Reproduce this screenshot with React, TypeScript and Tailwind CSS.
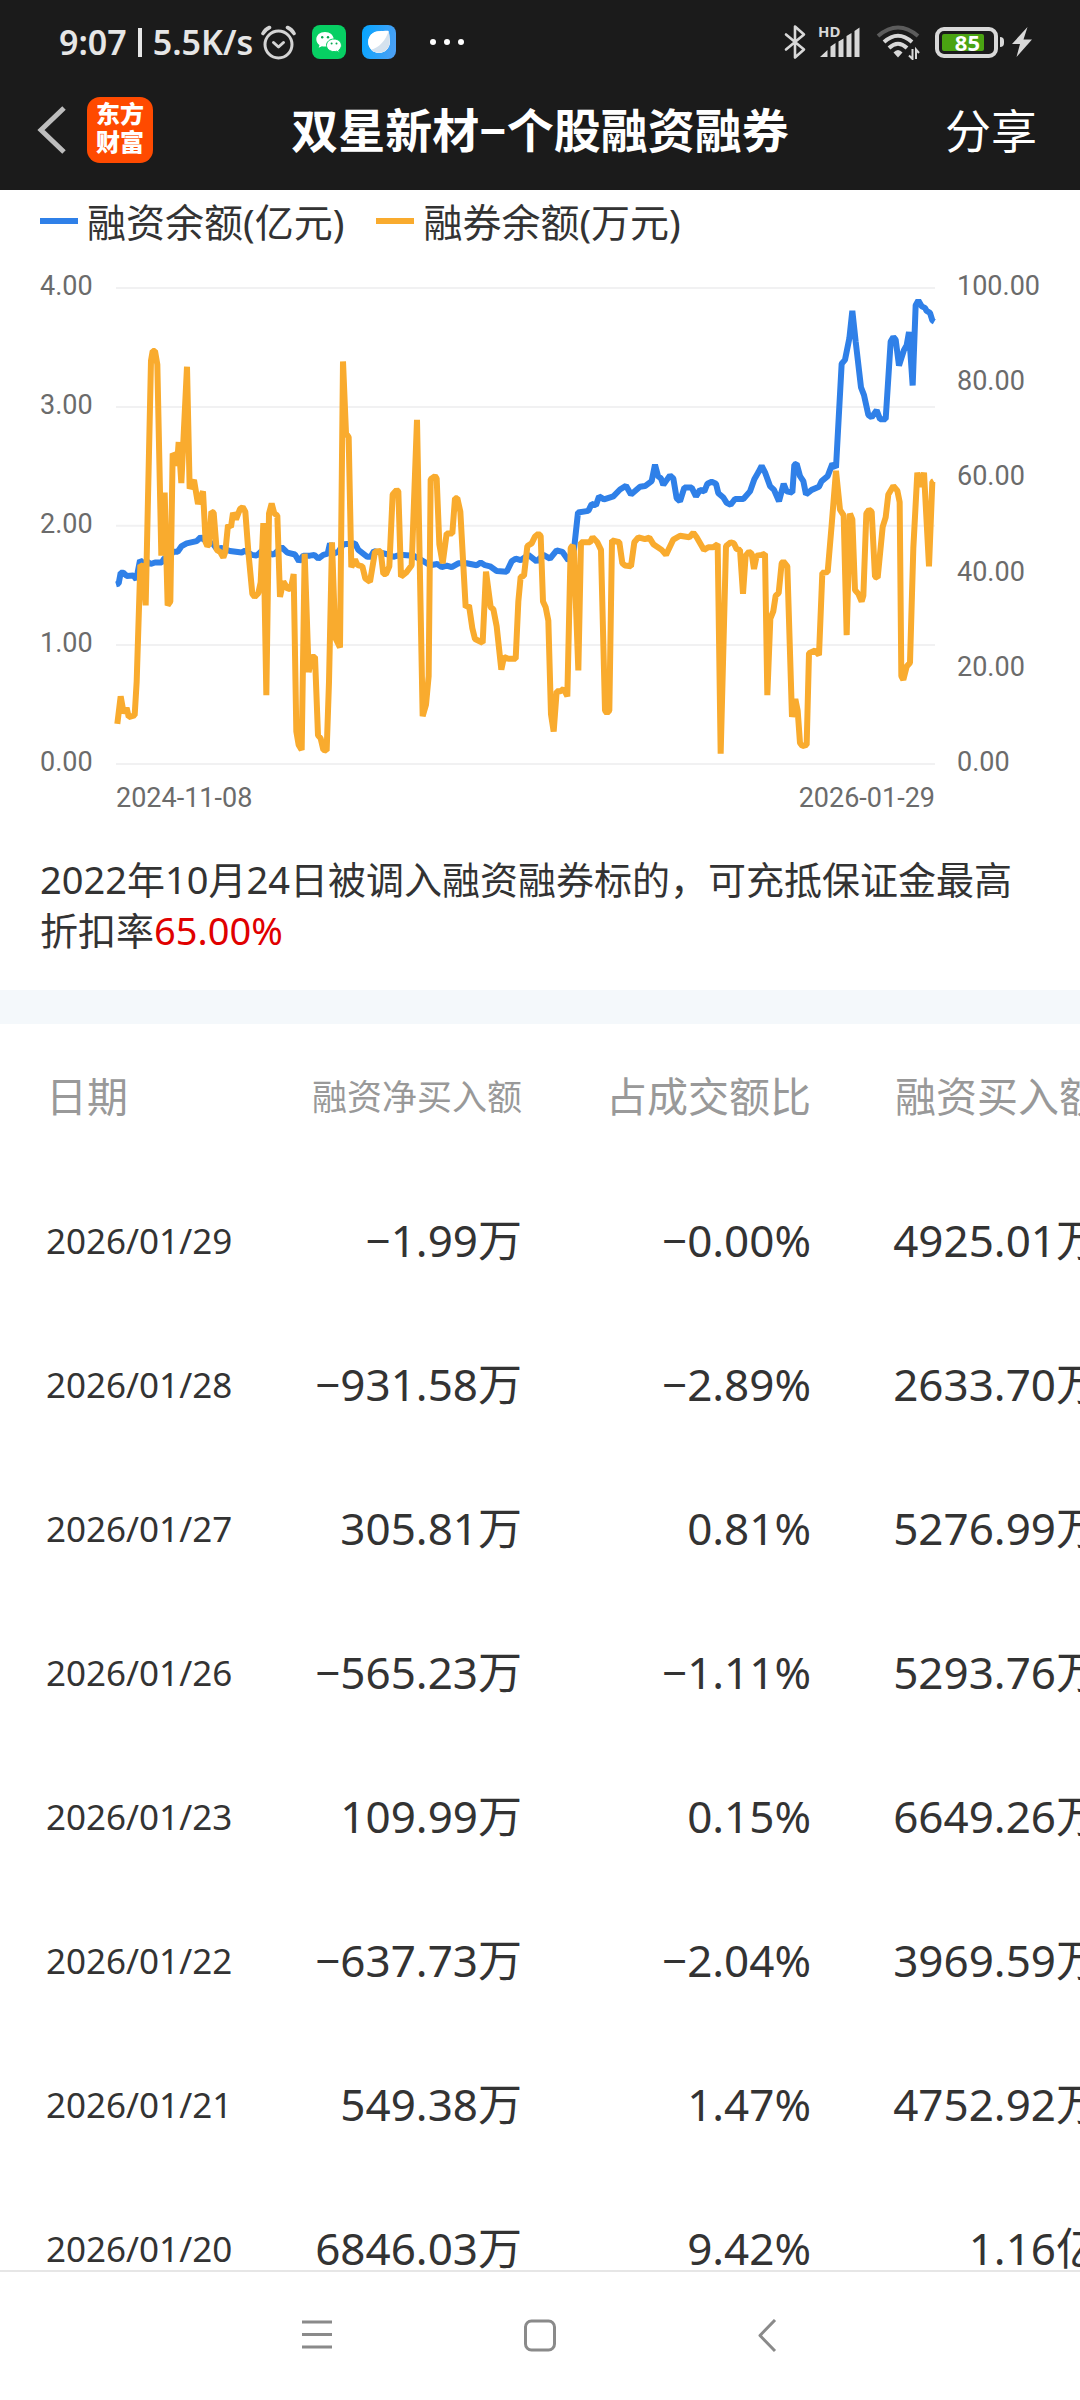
import React from "react";

type Row = { date: string; net: string; ratio: string; buy: string };

const rows: Row[] = [
  { date: "2026/01/29", net: "−1.99万", ratio: "−0.00%", buy: "4925.01万" },
  { date: "2026/01/28", net: "−931.58万", ratio: "−2.89%", buy: "2633.70万" },
  { date: "2026/01/27", net: "305.81万", ratio: "0.81%", buy: "5276.99万" },
  { date: "2026/01/26", net: "−565.23万", ratio: "−1.11%", buy: "5293.76万" },
  { date: "2026/01/23", net: "109.99万", ratio: "0.15%", buy: "6649.26万" },
  { date: "2026/01/22", net: "−637.73万", ratio: "−2.04%", buy: "3969.59万" },
  { date: "2026/01/21", net: "549.38万", ratio: "1.47%", buy: "4752.92万" },
  { date: "2026/01/20", net: "6846.03万", ratio: "9.42%", buy: "1.16亿" },
];

// Both series share a plot space of x 348–2805 and y 100 (top) – 1345 (zero line).
const balanceLine =
  "348,875 356,873 362,845 370,845 380,853 400,852 409,862 420,812 430,820 440,815 452,822 465,818 485,818 492,808 510,800 520,790 533,790 545,775 560,768 590,762 602,752 615,760 640,770 650,782 665,780 690,788 725,792 735,787 755,798 770,800 785,788 800,790 820,798 845,778 862,792 885,797 897,815 910,800 930,800 943,798 955,808 970,798 983,795 990,768 1000,795 1015,790 1030,770 1065,768 1075,785 1102,803 1112,803 1122,788 1165,797 1180,803 1200,798 1240,800 1265,812 1290,825 1312,822 1325,830 1340,826 1355,830 1375,820 1400,820 1430,825 1442,818 1455,825 1470,828 1490,840 1520,842 1535,815 1547,808 1562,812 1585,798 1610,815 1630,798 1650,808 1670,786 1687,790 1705,812 1720,800 1734,687 1765,683 1775,665 1788,668 1797,645 1812,653 1840,645 1860,627 1878,617 1893,640 1920,620 1935,618 1955,605 1965,562 1974,592 1983,598 1990,615 2010,590 2020,598 2030,650 2040,658 2053,622 2075,622 2088,645 2100,628 2113,632 2122,612 2135,607 2148,612 2155,637 2170,648 2180,662 2192,667 2205,652 2230,652 2250,632 2263,600 2275,582 2285,565 2295,582 2310,618 2322,628 2337,658 2351,612 2360,632 2377,635 2383,562 2390,560 2400,592 2410,605 2418,640 2435,628 2457,620 2465,605 2483,592 2497,560 2508,570 2525,298 2535,288 2548,232 2557,160 2567,240 2583,360 2592,380 2605,432 2615,438 2630,420 2640,443 2657,443 2672,240 2680,228 2687,235 2697,303 2712,262 2720,250 2727,215 2738,355 2747,145 2755,133 2765,148 2775,152 2780,160 2790,165 2797,185 2803,188";

const lendingLine =
  "352,1240 362,1168 371,1212 380,1198 386,1222 404,1218 410,1130 421,825 429,828 437,930 453,290 458,265 465,265 472,300 484,800 494,635 503,930 511,920 518,533 525,540 531,565 536,503 544,610 561,306 569,625 582,602 594,665 609,632 617,765 622,775 628,770 634,685 641,688 650,785 660,790 670,805 676,790 684,720 693,725 699,688 708,705 720,678 728,673 736,685 745,790 757,900 764,908 775,898 782,870 790,715 799,1165 807,690 815,664 823,690 832,695 840,908 850,868 864,888 873,885 881,848 889,1260 896,1295 905,1308 914,795 926,1105 935,1065 945,1065 954,1270 962,1278 970,1308 980,1310 987,1130 996,765 1006,1015 1020,1040 1029,292 1038,480 1046,490 1054,830 1065,810 1073,825 1087,828 1096,860 1110,868 1125,790 1142,788 1150,848 1158,848 1168,828 1178,640 1190,628 1195,632 1203,855 1220,843 1235,825 1251,445 1268,1220 1278,1190 1286,1115 1292,600 1305,592 1310,598 1318,770 1328,820 1340,742 1357,742 1365,650 1372,650 1381,685 1397,935 1407,930 1417,990 1425,1018 1448,1028 1458,842 1472,935 1480,940 1490,985 1504,1098 1512,1065 1525,1070 1547,1070 1555,920 1562,855 1572,853 1582,775 1595,768 1605,750 1615,743 1622,748 1629,920 1637,935 1645,970 1653,1215 1661,1260 1670,1155 1682,1155 1691,1148 1702,1168 1712,780 1718,773 1722,790 1735,1100 1743,765 1770,765 1778,752 1792,765 1803,785 1815,1205 1821,1212 1828,1205 1836,760 1858,765 1867,820 1875,826 1893,828 1903,765 1915,752 1935,757 1948,753 1960,770 1985,785 1998,798 2020,758 2040,748 2068,752 2080,740 2090,752 2112,785 2125,778 2140,778 2153,770 2162,1318 2178,775 2192,765 2202,768 2210,783 2220,785 2229,900 2237,800 2247,790 2255,795 2262,835 2270,800 2285,798 2295,795 2302,1165 2311,965 2320,945 2327,905 2336,898 2345,820 2350,815 2362,828 2376,1222 2386,1175 2393,1205 2400,1290 2407,1298 2420,1295 2427,1055 2445,1048 2457,1060 2467,845 2483,843 2495,720 2508,578 2520,680 2531,695 2540,1008 2550,690 2557,705 2565,890 2575,900 2585,920 2590,905 2599,690 2607,680 2615,685 2625,855 2633,858 2648,725 2657,700 2665,640 2680,618 2692,630 2699,660 2704,1115 2710,1125 2720,1090 2730,1080 2740,780 2752,583 2763,620 2772,583 2787,828 2797,607 2801,605";

function AlarmIcon() {
  return (
    <svg className="size-[35px]" viewBox="0 0 35 35" fill="none" stroke="#d4d4d4" strokeWidth="3" strokeLinecap="round" strokeLinejoin="round">
      <circle cx="17.500" cy="19.500" r="13.500" />
      <path d="M12.500 17.500 L17.500 22 L22.500 17.500" />
      <path d="M2 8.500 Q4 4.500 8.500 2.500M33 8.500 Q31 4.500 26.500 2.500" strokeWidth="3.600" />
    </svg>
  );
}

function ChatAppIcon() {
  return (
    <svg className="size-[34px]" viewBox="0 0 34 34">
      <rect width="34" height="34" rx="8" fill="#07cf63" />
      <path d="M13 7c-5 0-8.700 3.200-8.700 7.300 0 2.400 1.200 4.400 3.200 5.800l-.8 2.700 3.200-1.600c1 .3 2 .4 3.100.4 5 0 8.700-3.200 8.700-7.300S18 7 13 7z" fill="#fff" />
      <path d="M22 14c-4.300 0-7.500 2.800-7.500 6.300s3.200 6.300 7.500 6.300c.9 0 1.800-.1 2.600-.4l2.800 1.400-.7-2.400c1.700-1.200 2.700-2.900 2.700-4.900 0-3.500-3.100-6.300-7.400-6.300z" fill="#fff" stroke="#07cf63" strokeWidth="1" />
      <g fill="#07a850">
        <circle cx="10.200" cy="12.300" r="1.200" />
        <circle cx="16" cy="12.300" r="1.200" />
        <circle cx="19.600" cy="18.500" r="1" />
        <circle cx="24.500" cy="18.500" r="1" />
      </g>
    </svg>
  );
}

function BrowserAppIcon() {
  return (
    <svg className="size-[34px]" viewBox="0 0 34 34">
      <defs>
        <linearGradient id="browserBg" x1="0" y1="0.300" x2="1" y2="0.500">
          <stop offset="0" stopColor="#08a5ff" />
          <stop offset="1" stopColor="#4aa0f5" />
        </linearGradient>
      </defs>
      <rect width="34" height="34" rx="8" fill="url(#browserBg)" />
      <circle cx="17" cy="17" r="10.800" fill="#fff" />
      <path d="M17 6.200c3.500 0 8-.6 9.600-.2.500 2 1.200 7 1.200 11 0 6-5 10.800-10.800 10.800-6 0-10.800-5-10.800-10.800S11 6.200 17 6.200z" fill="#fff" />
      <path d="M26.600 6c.5 2 1.200 7 1.200 11 0 6-5 10.800-10.800 10.800-3 0-6-.8-8-3C17 23 24 15 26.600 6z" fill="#d5e2ee" />
    </svg>
  );
}

function StatusBar() {
  return (
    <div className="flex h-[72px] items-center justify-between pt-3 pr-[48px] pl-[59px] text-[#e6e6e6]">
      <div className="flex items-center">
        <span className="flex items-center gap-[11px] text-[34px] leading-none font-semibold whitespace-nowrap">
          <span>9:07</span>
          <i className="h-[29px] w-[4px] bg-[#e6e6e6]" />
          <span>5.5K/s</span>
        </span>
        <span className="ml-2 flex items-center gap-4">
          <AlarmIcon />
          <ChatAppIcon />
          <BrowserAppIcon />
        </span>
        <span className="ml-[34px] flex gap-[8px]">
          <i className="size-[6px] rounded-full bg-white" />
          <i className="size-[6px] rounded-full bg-white" />
          <i className="size-[6px] rounded-full bg-white" />
        </span>
      </div>
      <div className="flex items-center">
        <svg className="mr-3 h-[36px] w-[22px]" viewBox="0 0 22 36" fill="none" stroke="#d8d8d8" strokeWidth="2.600" strokeLinejoin="round" strokeLinecap="round">
          <path d="M2 10.500 L20 25.500 L11 33.500 V2.500 L20 10.500 L2 25.500" />
        </svg>
        <svg className="mr-[15px] h-[34px] w-[43px] overflow-visible" viewBox="0 0 43 34" fill="#d8d8d8">
          <text x="0" y="12" fontFamily="Noto Sans" fontSize="15" fontWeight="700">HD</text>
          <path d="M2 32 L9.500 25 V32z M12.500 21.500 L17.500 18 V32 H12.500z M20.500 16.500 L25.500 13.500 V32 H20.500z M28.500 11 L33.500 8 V32 H28.500z M36.500 6 L41.500 2.500 V32 H36.500z" />
        </svg>
        <svg className="mr-[15px] h-[36px] w-[44px]" viewBox="0 0 44 36" fill="none" strokeWidth="4">
          <path d="M2 12 Q22 -5 42 12" stroke="#5c5c5c" />
          <path d="M8 18 Q22 5.500 36 18" stroke="#d8d8d8" />
          <path d="M13 24 Q22 15.500 31 24" stroke="#d8d8d8" />
          <path d="M17.500 28.500 Q22 23.500 26.500 28.500 L22 33.500z" fill="#d8d8d8" />
          <path d="M36.500 25 V35 L33 31.500M40 35 V25.500 L43 29" stroke="#d8d8d8" strokeWidth="2" />
        </svg>
        <span className="flex h-[31px] w-[63px] items-center rounded-[9px] border-4 border-[#d8d8d8] p-[3px]">
          <span className="flex h-full w-[42px] items-center justify-end rounded-[2px] bg-[#4aa312] pr-1 text-[22px] leading-none font-bold text-white">
            85
          </span>
        </span>
        <i className="ml-[2px] h-[10px] w-[4px] rounded-r-sm bg-[#d8d8d8]" />
        <svg className="ml-2 h-[30px] w-[20px]" viewBox="0 0 20 30" fill="#d8d8d8">
          <path d="M15.500 0 L0 17 H8 L4.500 30 L20 12.500 H11.500z" />
        </svg>
      </div>
    </div>
  );
}

function TitleBar() {
  return (
    <div className="grid h-[118px] grid-cols-[1fr_auto_1fr] items-center px-9 pb-[2px] text-white">
      <div className="flex items-center gap-[20px]">
        <button type="button" aria-label="返回">
          <svg className="h-[50px] w-[31px]" viewBox="0 0 31 50" fill="none" stroke="#bdbdbd" strokeWidth="5">
            <path d="M28 3 L5 25 L28 47" />
          </svg>
        </button>
        <span className="flex size-[66px] flex-col items-center justify-center rounded-[13px] bg-[#ff4a00] pb-1 text-[24px] leading-[28px] font-black">
          <span>东方</span>
          <span>财富</span>
        </span>
      </div>
      <h1 className="text-[47px] leading-none font-bold whitespace-nowrap">双星新材−个股融资融券</h1>
      <button type="button" className="justify-self-end pr-[7px] text-[46px] leading-none whitespace-nowrap">
        分享
      </button>
    </div>
  );
}

function LegendItem({ swatch, label }: { swatch: string; label: string }) {
  return (
    <span className="flex items-center gap-[9px]">
      <i className={`h-[6px] w-[38px] ${swatch}`} />
      <span className="whitespace-nowrap">{label}</span>
    </span>
  );
}

function Chart() {
  return (
    <section className="px-10">
      <div className="flex h-[62px] items-center gap-[32px] text-[39px] leading-none text-[#333]">
        <LegendItem swatch="bg-[#2f80e8]" label="融资余额(亿元)" />
        <LegendItem swatch="bg-[#f9ab2e]" label="融券余额(万元)" />
      </div>
      <div className="flex items-start pt-5 font-['Roboto',sans-serif] text-[27px] leading-[28px] text-[#6b6b6b]">
        <div className="flex h-[504px] w-[76px] flex-col justify-between">
          {["4.00", "3.00", "2.00", "1.00", "0.00"].map((v) => (
            <span key={v}>{v}</span>
          ))}
        </div>
        <div className="min-w-0 flex-1 pt-4">
          <svg className="block h-[476px] w-full overflow-visible" viewBox="348 100 2457 1245" preserveAspectRatio="none" fill="none">
            {[100, 411, 722, 1034, 1345].map((y) => (
              <line key={y} x1="348" x2="2805" y1={y} y2={y} stroke="#f1f1f2" strokeWidth="2" vectorEffect="non-scaling-stroke" />
            ))}
            <polyline points={balanceLine} stroke="#2f80e8" strokeWidth="6" strokeLinejoin="bevel" vectorEffect="non-scaling-stroke" />
            <polyline points={lendingLine} stroke="#f9ab2e" strokeWidth="6" strokeLinejoin="bevel" vectorEffect="non-scaling-stroke" />
          </svg>
          <div className="mt-5 flex justify-between">
            <span>2024-11-08</span>
            <span>2026-01-29</span>
          </div>
        </div>
        <div className="flex h-[504px] w-[105px] flex-col justify-between pl-[22px]">
          {["100.00", "80.00", "60.00", "40.00", "20.00", "0.00"].map((v) => (
            <span key={v}>{v}</span>
          ))}
        </div>
      </div>
      <p className="pt-[42px] pb-[34px] text-[38px] leading-[51px] text-[#333]">
        2022年10月24日被调入融资融券标的，可充抵保证金最高折扣率<span className="text-[#e00000]">65.00%</span>
      </p>
    </section>
  );
}

function MarginTable() {
  return (
    <table className="w-[1100px] table-fixed text-right leading-none whitespace-nowrap text-[#333]">
      <colgroup>
        <col className="w-[233px]" />
        <col className="w-[289px]" />
        <col className="w-[289px]" />
        <col className="w-[289px]" />
      </colgroup>
      <thead className="text-[41px] text-[#999]">
        <tr className="h-[144px]">
          <th scope="col" className="pl-[46px] text-left font-normal">日期</th>
          <th scope="col" className="text-[35px] font-normal">融资净买入额</th>
          <th scope="col" className="font-normal">占成交额比</th>
          <th scope="col" className="font-normal">融资买入额</th>
        </tr>
      </thead>
      <tbody className="text-[44px]">
        {rows.map((r) => (
          <tr key={r.date} className="h-[144px]">
            <th scope="row" className="pl-[46px] text-left text-[35px] font-normal">{r.date}</th>
            <td>{r.net}</td>
            <td>{r.ratio}</td>
            <td>{r.buy}</td>
          </tr>
        ))}
      </tbody>
    </table>
  );
}

function NavBar() {
  return (
    <nav className="flex h-[130px] shrink-0 items-center justify-center border-t-2 border-[#e6e6e6] bg-white">
      <button type="button" aria-label="最近任务" className="flex w-[225px] justify-center">
        <svg className="size-[34px]" viewBox="0 0 34 34" stroke="#8a8a8a" strokeWidth="3">
          <path d="M4 3 H34M4 15.500 H34M4 28 H34" />
        </svg>
      </button>
      <button type="button" aria-label="主屏幕" className="flex w-[225px] justify-center">
        <svg className="size-[34px]" viewBox="0 0 34 34" fill="none" stroke="#8a8a8a" strokeWidth="3">
          <rect x="2.500" y="2" width="29" height="29" rx="6" />
        </svg>
      </button>
      <button type="button" aria-label="后退" className="flex w-[225px] justify-center">
        <svg className="size-[34px]" viewBox="0 0 34 34" fill="none" stroke="#8a8a8a" strokeWidth="3" strokeLinejoin="round">
          <path d="M27 1 L12 16.500 L27 32" />
        </svg>
      </button>
    </nav>
  );
}

export default function App() {
  return (
    <div className="flex h-screen flex-col overflow-hidden bg-white font-['Noto_Sans','Noto_Sans_CJK_SC',sans-serif]">
      <header className="shrink-0 bg-[#1b1b1b]">
        <StatusBar />
        <TitleBar />
      </header>
      <main className="min-h-0 flex-1 overflow-hidden">
        <Chart />
        <div className="h-[34px] bg-[#f4f8fb]" />
        <MarginTable />
      </main>
      <NavBar />
    </div>
  );
}
